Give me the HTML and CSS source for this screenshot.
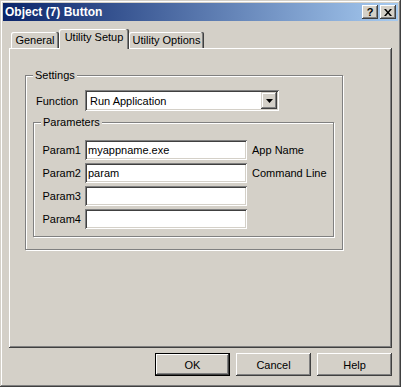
FILE: index.html
```html
<!DOCTYPE html>
<html lang="en">
<head>
  <meta charset="UTF-8" />
  <meta name="viewport" content="width=device-width, initial-scale=1.0"/>
  <title>Object (7) Button</title>
  <link rel="stylesheet" href="styles.css">
</head>
<body>

  <div class="dialog">

    <div class="titlebar">
      <span class="title">Object (7) Button</span>
      <div class="title-buttons">
        <button class="cap-btn">?</button>
        <button class="cap-btn">
          <svg width="8" height="7" viewBox="0 0 8 7"><path d="M0 0h2l2 2.4L6 0h2L5 3.5 8 7H6L4 4.6 2 7H0l3-3.5z" fill="#000"/></svg>
        </button>
      </div>
    </div>

    <div class="tabs">
      <div class="tab tab-general">General</div>
      <div class="tab tab-setup active">Utility Setup</div>
      <div class="tab tab-options">Utility Options</div>
    </div>

    <div class="tab-panel">
      <div class="group settings">
        <span class="group-title">Settings</span>

        <div class="function-row">
          <label class="function-label">Function</label>
          <div class="combo">
            <span>Run Application</span>
            <span class="combo-btn">
              <svg width="7" height="4" viewBox="0 0 7 4"><path d="M0 0h7L3.5 4z" fill="#000"/></svg>
            </span>
          </div>
        </div>

        <div class="group params">
          <span class="group-title">Parameters</span>
          <div class="param-grid">
            <label class="param-label">Param1</label>
            <input class="field" type="text" value="myappname.exe" />
            <span class="param-note">App Name</span>

            <label class="param-label">Param2</label>
            <input class="field" type="text" value="param" />
            <span class="param-note">Command Line</span>

            <label class="param-label">Param3</label>
            <input class="field" type="text" value="" />
            <span class="param-note"></span>

            <label class="param-label">Param4</label>
            <input class="field" type="text" value="" />
            <span class="param-note"></span>
          </div>
        </div>
      </div>
    </div>

    <div class="dialog-buttons">
      <button class="btn default">OK</button>
      <button class="btn">Cancel</button>
      <button class="btn">Help</button>
    </div>

  </div>

</body>
</html>
```

FILE: styles.css
```css
* {
  box-sizing: border-box;
}

body {
  margin: 0;
  font-family: "Liberation Sans", Arial, sans-serif;
  font-size: 11px;
  color: #000;
  background: #d4d0c8;
}

.dialog {
  width: 401px;
  height: 387px;
  padding: 3px;
  display: flex;
  flex-direction: column;
  background: #d4d0c8;
  box-shadow: inset -1px -1px #404040, inset 1px 1px #d4d0c8, inset -2px -2px #808080, inset 2px 2px #fff;
}

/* title bar */
.titlebar {
  height: 18px;
  display: flex;
  align-items: center;
  justify-content: space-between;
  padding: 0 2px;
  background: linear-gradient(to right, #0a246a, #a6caf0);
  color: #fff;
}

.title {
  font-weight: bold;
  font-size: 12px;
}

.title-buttons {
  display: flex;
  gap: 2px;
}

.cap-btn {
  width: 16px;
  height: 14px;
  padding: 0;
  border: none;
  display: flex;
  align-items: center;
  justify-content: center;
  background: #d4d0c8;
  color: #000;
  font-family: "Liberation Sans", Arial, sans-serif;
  font-weight: bold;
  font-size: 11px;
  box-shadow: inset -1px -1px #404040, inset 1px 1px #fff, inset -2px -2px #808080;
}

/* tabs */
.tabs {
  display: flex;
  align-items: flex-start;
  height: 20px;
  margin: 8px 0 -1px 8px;
  z-index: 1;
}

.tab {
  height: 16px;
  margin-top: 3px;
  padding-top: 2px;
  line-height: 13px;
  text-align: center;
  background: #d4d0c8;
  border-radius: 2px 2px 0 0;
  box-shadow: inset -1px 0 #404040, inset -2px 0 #808080, inset 1px 1px #fff;
}

.tab-general {
  width: 48px;
}

.tab-setup {
  width: 70px;
}

.tab-options {
  width: 75px;
}

.tab.active {
  height: 20px;
  margin-top: 0;
}

.tab-panel {
  flex: 1;
  margin: 0 6px;
  padding: 27px 0 0 16px;
  box-shadow: inset -1px -1px #404040, inset 1px 1px #fff, inset -2px -2px #808080;
}

/* group boxes */
.group {
  position: relative;
  border: 1px solid #808080;
  box-shadow: inset 1px 1px #fff, 1px 1px #fff;
}

.group-title {
  position: absolute;
  top: -7px;
  left: 7px;
  padding: 0 2px;
  line-height: 13px;
  background: #d4d0c8;
}

.settings {
  width: 318px;
  padding: 14px 7px 12px 7px;
}

.function-row {
  display: flex;
  align-items: center;
  margin-bottom: 11px;
}

.function-label {
  width: 49px;
  margin-left: 3px;
}

.combo {
  width: 194px;
  height: 21px;
  padding: 2px 2px 2px 5px;
  display: flex;
  align-items: center;
  justify-content: space-between;
  background: #fff;
  box-shadow: inset 1px 1px #808080, inset -1px -1px #fff, inset 2px 2px #404040, inset -2px -2px #d4d0c8;
}

.combo-btn {
  width: 16px;
  height: 17px;
  display: flex;
  align-items: center;
  justify-content: center;
  background: #d4d0c8;
  box-shadow: inset -1px -1px #404040, inset 1px 1px #d4d0c8, inset -2px -2px #808080, inset 2px 2px #fff;
}

.params {
  width: 301px;
  padding: 17px 0 7px 0;
}

.param-grid {
  display: grid;
  grid-template-columns: 48px 162px auto;
  grid-auto-rows: 20px;
  row-gap: 3px;
  column-gap: 3px;
  align-items: center;
}

.param-label {
  text-align: right;
  padding-right: 1px;
}

.param-note {
  margin-left: 2px;
}

.field {
  width: 162px;
  height: 20px;
  padding: 0 3px;
  border: none;
  outline: none;
  font: inherit;
  color: #000;
  background: #fff;
  box-shadow: inset 1px 1px #808080, inset -1px -1px #fff, inset 2px 2px #404040, inset -2px -2px #d4d0c8;
}

/* bottom buttons */
.dialog-buttons {
  display: flex;
  justify-content: flex-end;
  gap: 6px;
  margin: 5px 6px 8px;
}

.btn {
  width: 75px;
  height: 23px;
  padding: 0;
  border: none;
  font: inherit;
  color: #000;
  background: #d4d0c8;
  box-shadow: inset -1px -1px #404040, inset 1px 1px #fff, inset -2px -2px #808080, inset 2px 2px #d4d0c8;
}

.btn.default {
  box-shadow: inset 0 0 0 1px #000, inset -2px -2px #404040, inset 2px 2px #fff, inset -3px -3px #808080;
}
```
